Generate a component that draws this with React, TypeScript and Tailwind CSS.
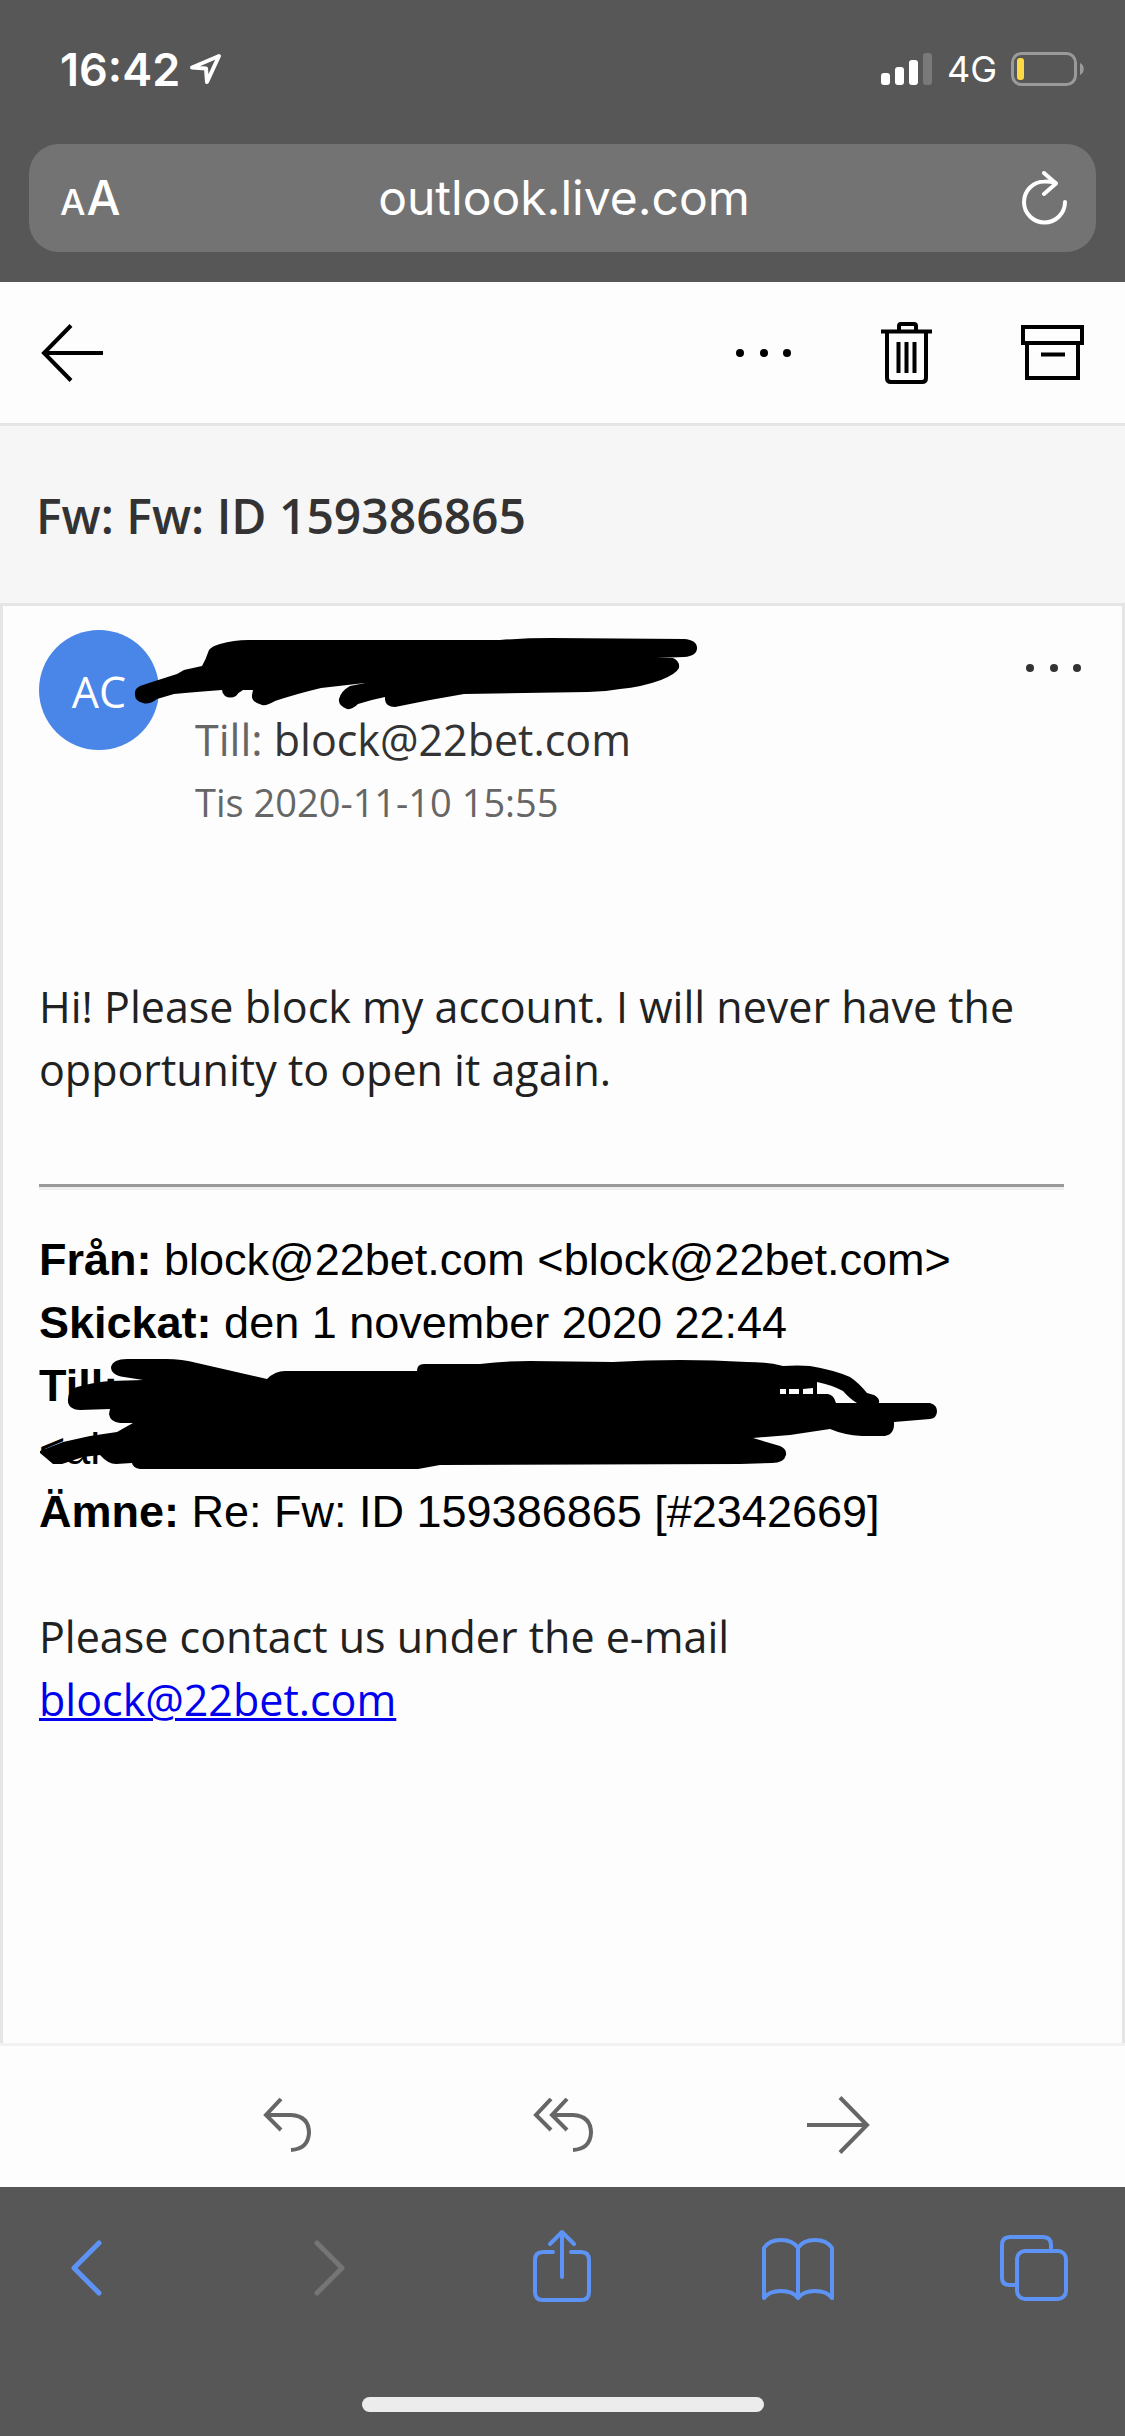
import type { ReactNode } from "react";

function StatusBar() {
  return (
    <div className="flex h-36 items-center justify-between pb-1.5 pl-[60px] pr-10 text-white">
      <div className="flex items-center gap-2">
        <span className="text-[45px] font-semibold leading-none">16:42</span>
        <svg className="h-8 w-9" viewBox="0 0 36 32" fill="none" stroke="currentColor" strokeWidth="4" strokeLinejoin="round">
          <path d="M31 3L4 14.500L18 15.500L19 29Z" />
        </svg>
      </div>
      <div className="flex items-center gap-[14px]">
        <svg className="h-8 w-[52px]" viewBox="0 0 52 32" fill="currentColor">
          <rect x="0" y="20" width="9" height="12" rx="3" />
          <rect x="14" y="14" width="9" height="18" rx="3" />
          <rect x="28" y="7" width="9" height="25" rx="3" />
          <rect x="42" y="0" width="9" height="32" rx="3" fill="#797979" />
        </svg>
        <span className="text-[36px] leading-none">4G</span>
        <svg className="h-[34px] w-[74px]" viewBox="0 0 74 34" fill="none">
          <rect x="1.500" y="1.500" width="63" height="31" rx="9" stroke="#9a9a9a" strokeWidth="3" />
          <rect x="6" y="6" width="7" height="22" rx="3" fill="#fcd945" />
          <path d="M69 11C74 13 74 21 69 23Z" fill="#9a9a9a" />
        </svg>
      </div>
    </div>
  );
}

function AddressBar() {
  return (
    <div className="mx-[29px] grid h-[108px] grid-cols-[1fr_auto_1fr] items-center rounded-[30px] bg-[#737373] pl-[31px] pr-[28px] text-white">
      <button className="flex items-baseline gap-px justify-self-start font-medium" aria-label="Textstorlek">
        <span className="text-[36px] leading-none">A</span>
        <span className="text-[48px] leading-none">A</span>
      </button>
      <input
        className="w-[420px] bg-transparent text-center text-[48px] outline-none"
        aria-label="Adress"
        defaultValue="outlook.live.com"
      />
      <button className="justify-self-end" aria-label="Ladda om">
        <svg className="h-[54px] w-[46px]" viewBox="0 0 46 54" fill="none" stroke="currentColor" strokeWidth="4" strokeLinecap="round" strokeLinejoin="round">
          <path d="M43 31A20.500 20.500 0 1 1 22.500 10.500Q28 10.300 33.500 12" />
          <path d="M22 2L34 12.500L22 23" />
        </svg>
      </button>
    </div>
  );
}

function Dots() {
  return (
    <svg className="h-3 w-14" viewBox="0 0 56 12" fill="currentColor">
      <circle cx="4" cy="6" r="4" />
      <circle cx="28" cy="6" r="4" />
      <circle cx="51" cy="6" r="4" />
    </svg>
  );
}

function Toolbar() {
  return (
    <nav className="flex h-36 items-center justify-between border-b-[3px] border-[#e5e5e5] px-[41px] text-black">
      <button aria-label="Tillbaka">
        <svg className="h-[58px] w-[62px]" viewBox="0 0 62 58" fill="none" stroke="currentColor" strokeWidth="4">
          <path d="M62 29H3M30 1.500L3 29L30 56.500" />
        </svg>
      </button>
      <div className="flex items-center gap-[89px]">
        <button aria-label="Fler alternativ">
          <Dots />
        </button>
        <button aria-label="Ta bort">
          <svg className="h-16 w-[51px]" viewBox="0 0 51 64" fill="none" stroke="currentColor" strokeWidth="4">
            <path d="M0 10.500H51M18 10V5Q18 3 20 3H33Q35 3 35 5V10" />
            <path d="M6 11V57Q6 61 10 61H41Q45 61 45 57V11" />
            <path d="M17.500 21V52M25.500 21V52M33.500 21V52" />
          </svg>
        </button>
        <button aria-label="Arkivera">
          <svg className="h-14 w-[63px]" viewBox="0 0 63 56" fill="none" stroke="currentColor" strokeWidth="4">
            <path d="M2 2H61V18H2ZM6 18V53H57V18M20 29.500H44" />
          </svg>
        </button>
      </div>
    </nav>
  );
}

function MessageHeader() {
  return (
    <header className="relative flex gap-9 pl-9 pr-10 pt-6">
      <div className="flex h-[120px] w-[120px] shrink-0 items-center justify-center rounded-full bg-[#4a86e8] pt-1 text-[43px] text-white">
        AC
      </div>
      <div className="flex-1 pt-[79px] leading-[62px]">
        <p className="text-[43px] text-[#333]">
          <span className="text-[#666]">Till:</span> block@22bet.com
        </p>
        <p className="text-[38px] text-[#666]">Tis 2020-11-10 15:55</p>
      </div>
      <button className="mt-8 self-start text-[#333]" aria-label="Fler åtgärder">
        <Dots />
      </button>
      {/* marker strokes over the sender's name */}
      <svg className="absolute left-[127px] top-6 h-[84px] w-[572px]" viewBox="130 630 572 84" aria-hidden="true">
        <path d="M135 695Q134 689 140 686L152 682L177 674L184 670L202 666Q206 659 209 650Q212 646 220 644Q234 640 248 640H500Q525 638 551 638L684 639Q697 640 697 648Q697 656 684 657L657 658H673Q680 661 679 668Q676 674 661 680Q642 687 620 689Q604 692 588 692L464 694L430 700L395 707Q386 707 385 700V697Q370 700 358 704Q352 710 347 709Q338 706 339 699Q341 691 350 686L365 683L321 688Q296 694 275 701Q267 706 262 705Q251 702 252 695L253 690H243Q239 692 236 696Q230 699 225 696Q222 693 222 690Q195 692 174 694L157 699Q149 705 143 703Q135 701 135 695Z" />
      </svg>
    </header>
  );
}

function QuotedHeader() {
  return (
    <div className="relative mt-[38px] font-['Liberation_Sans',Arial,sans-serif] text-[45px] leading-[63px] text-black">
      <p>
        <b>Från:</b> block@22bet.com &lt;block@22bet.com&gt;
      </p>
      <p>
        <b>Skickat:</b> den 1 november 2020 22:44
      </p>
      <p>
        <b>Till:</b>
      </p>
      <p>&lt;al</p>
      <p>
        <b>Ämne:</b> Re: Fw: ID 159386865 [#2342669]
      </p>
      {/* marker strokes over the recipient */}
      <svg className="absolute -left-1 top-32 h-[118px] w-[905px]" viewBox="35 1356 905 118" aria-hidden="true">
        <path
          fillRule="evenodd"
          d="M127 1359H166Q182 1359 197 1363L267 1379Q275 1371 285 1371H417Q417 1364 424 1364H480Q505 1361 530 1361L613 1362Q680 1358 747 1362Q768 1362 783 1366Q798 1365 810 1366Q834 1370 850 1377Q859 1383 867 1393L874 1395Q880 1398 879 1403H930Q937 1405 937 1411Q937 1418 930 1419L894 1422Q895 1436 882 1436H862Q844 1435 830 1429L790 1435L753 1438L780 1446Q787 1449 786 1455Q784 1463 772 1463L740 1464L440 1465L418 1469H140Q133 1468 132 1463L116 1464Q108 1464 100 1455L83 1457L62 1464H53L46 1458L40 1453V1451L63 1442L90 1436L117 1432L133 1423H120Q110 1422 109 1414L110 1409L80 1410Q67 1409 68 1399Q69 1389 77 1387Q95 1382 110 1381L143 1380L124 1377Q111 1375 111 1367Q113 1359 127 1359ZM817 1382V1394H828Q834 1395 836 1403H857Q850 1399 843 1391Q832 1385 817 1382ZM780 1389V1394H786V1389ZM789 1389V1394H799V1389ZM803 1389V1394H813V1388Z"
        />
      </svg>
    </div>
  );
}

function ReplyBar() {
  return (
    <div className="flex h-36 items-center justify-center gap-[213px] border-t-[3px] border-[#f2f2f2] pt-4 text-[#666]">
      <button className="flex w-[63px] justify-center" aria-label="Svara">
        <svg className="h-[54px] w-12" viewBox="0 0 48 54" fill="none" stroke="currentColor" strokeWidth="4">
          <path d="M18 1L3 17L18 32M3 17H28Q46 18 46 35Q45 51 28 52" />
        </svg>
      </button>
      <button className="flex w-[63px] justify-center" aria-label="Svara alla">
        <svg className="h-[54px] w-[60px]" viewBox="0 0 60 54" fill="none" stroke="currentColor" strokeWidth="4">
          <path d="M18 1L3 17L18 32M34 1L19 17L34 32M19 17H40Q58 18 58 35Q57 51 40 52" />
        </svg>
      </button>
      <button className="flex w-[63px] justify-center" aria-label="Vidarebefordra">
        <svg className="h-[58px] w-[63px]" viewBox="0 0 63 58" fill="none" stroke="currentColor" strokeWidth="4">
          <path d="M0 29H60M33 1.500L60 29L33 56.500" />
        </svg>
      </button>
    </div>
  );
}

function NavButton({ label, disabled, children }: { label: string; disabled?: boolean; children: ReactNode }) {
  return (
    <button aria-label={label} disabled={disabled} className="text-[#5e93f6] disabled:text-[#757575]">
      <svg className="h-[74px] w-[72px]" viewBox="0 0 72 74" fill="none" stroke="currentColor" strokeWidth="4" strokeLinecap="round" strokeLinejoin="round">
        {children}
      </svg>
    </button>
  );
}

function BrowserNav() {
  return (
    <footer className="bg-[#575757] pb-6 pt-[42px]">
      <div className="flex justify-between pl-[51px] pr-[54px]">
        <NavButton label="Bakåt">
          <path strokeWidth="5" d="M48 14L23 39L48 64" />
        </NavButton>
        <NavButton label="Framåt" disabled>
          <path strokeWidth="5" d="M29 14L54 39L29 64" />
        </NavButton>
        <NavButton label="Dela">
          <path d="M28 23H18Q10 23 10 31V63Q10 71 18 71H56Q64 71 64 63V31Q64 23 56 23H46" />
          <path d="M37 48V4M25 15L37 3L49 15" />
        </NavButton>
        <NavButton label="Bokmärken">
          <path d="M36 19Q31 11 19 11Q7 11 2 19V69Q7 62 19 62Q31 62 36 69Q41 62 53 62Q65 62 70 69V19Q65 11 53 11Q41 11 36 19ZM36 19V69" />
        </NavButton>
        <NavButton label="Flikar">
          <path d="M52 21V16Q52 8 44 8H11Q3 8 3 16V49Q3 56 11 56H17" />
          <rect x="18" y="22" width="49" height="48" rx="8" />
        </NavButton>
      </div>
      <div className="mx-auto mt-[94px] h-[15px] w-[402px] rounded-full bg-[#ececec]" />
    </footer>
  );
}

export default function App() {
  return (
    <div className="flex min-h-screen flex-col bg-[#fdfdfd] font-['Open_Sans','Noto_Sans',sans-serif]">
      <div className="bg-[#575757] pb-[30px] font-['Inter',sans-serif]">
        <StatusBar />
        <AddressBar />
      </div>
      <Toolbar />
      <h1 className="flex h-[177px] items-center bg-[#f6f6f6] px-9 pt-0.5 text-[48px] font-semibold text-[#333]">
        Fw: Fw: ID 159386865
      </h1>
      <main className="flex-1 border-x-[3px] border-t-[3px] border-[#e5e5e5]">
        <MessageHeader />
        <article className="mt-[142px] pl-9 pr-[58px] text-[43px] leading-[63px] text-[#212121]">
          <p>Hi! Please block my account. I will never have the opportunity to open it again.</p>
          <hr className="mt-[83px] border-b-[3px] border-t-[3px] border-b-[#eee] border-t-[#999]" />
          <QuotedHeader />
          <p className="mt-[62px]">
            Please contact us under the e-mail
            <br />
            <a href="mailto:block@22bet.com" className="text-[#0000ee] underline decoration-[3px]">
              block@22bet.com
            </a>
          </p>
        </article>
      </main>
      <ReplyBar />
      <BrowserNav />
    </div>
  );
}
